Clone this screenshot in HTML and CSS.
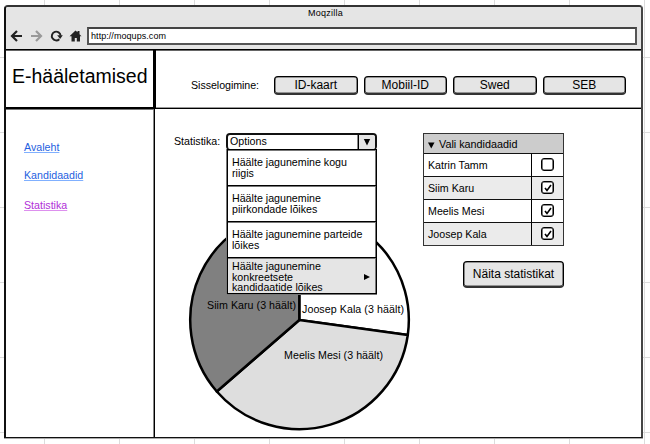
FILE: index.html
```html
<!DOCTYPE html>
<html lang="et">
<head>
<meta charset="utf-8">
<title>Moqzilla</title>
<link rel="stylesheet" href="styles.css">
</head>
<body>
<div class="window">
  <header class="chrome">
    <div class="title">Moqzilla</div>
    <div class="toolbar">
      <svg class="nav" width="74" height="16" viewBox="0 0 74 16" fill="none">
        <path d="M12 8H2M7 3L2 8l5 5" stroke="#222" stroke-width="2.2"/>
        <path d="M21 8h10M26 3l5 5-5 5" stroke="#999" stroke-width="2.2"/>
        <path d="M49.300 11.200A4.400 4.400 0 1 1 50.600 7.600" stroke="#222" stroke-width="1.9"/>
        <path d="M47.200 7.200h5.600l-2.700 3.800z" fill="#222"/>
        <path d="M59.500 8.200L65.500 2.500l2 1.800V3h2v3.200L71.500 8.200h-1.500V13.500h-3.200v-3.500h-2v3.500h-3.300V8.200z" fill="#222"/>
      </svg>
      <div class="address">http://moqups.com</div>
    </div>
  </header>
  <div class="page">
    <h1 class="brand">E-hääletamised</h1>
    <section class="login">
      <span class="login-label">Sisselogimine:</span>
      <button class="btn">ID-kaart</button>
      <button class="btn">Mobiil-ID</button>
      <button class="btn">Swed</button>
      <button class="btn">SEB</button>
    </section>
    <nav class="side">
      <a>Avaleht</a>
      <a>Kandidaadid</a>
      <a class="visited">Statistika</a>
    </nav>
    <main class="content">
      <section class="stats">
        <div class="field">
          <span class="field-label">Statistika:</span>
          <div class="select">
            <span class="value">Options</span>
            <span class="arrow"><svg width="8" height="7"><path d="M.8 0h6.400L4 6.500z"/></svg></span>
            <ul class="menu">
              <li>Häälte jagunemine kogu<br>riigis</li>
              <li>Häälte jagunemine<br>piirkondade lõikes</li>
              <li>Häälte jagunemine parteide<br>lõikes</li>
              <li class="active">Häälte jagunemine<br>konkreetsete<br>kandidaatide lõikes<svg class="more" width="6" height="6"><path d="M0 0v6l6-3z"/></svg></li>
            </ul>
          </div>
        </div>
        <svg class="pie" width="224" height="224" viewBox="0 0 224 224">
          <g stroke="#000" stroke-width="2.5" stroke-linejoin="round">
            <path fill="#fff" d="M111.300 112V2.500A109.500 109.500 0 0 1 219.800 127z"/>
            <path fill="#dedede" d="M111.300 112L219.800 127A109.500 109.500 0 0 1 28.800 183.500z"/>
            <path fill="#808080" d="M111.300 112L28.800 183.500A109.500 109.500 0 0 1 111.300 2.500z"/>
          </g>
          <text x="19" y="101" textLength="89">Siim Karu (3 häält)</text>
          <text x="114" y="105" textLength="102">Joosep Kala (3 häält)</text>
          <text x="96" y="151" textLength="99">Meelis Mesi (3 häält)</text>
        </svg>
      </section>
      <section class="candidates">
        <table class="list">
          <colgroup><col><col class="check"></colgroup>
          <thead><tr><th colspan="2"><svg width="7" height="7"><path d="M0 .5h6.500L3.250 6.500z"/></svg>Vali kandidaadid</th></tr></thead>
          <tbody>
            <tr><td>Katrin Tamm</td><td><i class="box"></i></td></tr>
            <tr><td>Siim Karu</td><td><i class="box"><svg width="8" height="8"><path d="M1 4l2 2.500L7 1"/></svg></i></td></tr>
            <tr><td>Meelis Mesi</td><td><i class="box"><svg width="8" height="8"><path d="M1 4l2 2.500L7 1"/></svg></i></td></tr>
            <tr><td>Joosep Kala</td><td><i class="box"><svg width="8" height="8"><path d="M1 4l2 2.500L7 1"/></svg></i></td></tr>
          </tbody>
        </table>
        <button class="btn show">Näita statistikat</button>
      </section>
    </main>
  </div>
</div>
</body>
</html>
```
FILE: styles.css
```css
* { box-sizing: border-box; }
body {
  margin: 0;
  height: 444px;
  overflow: hidden;
  padding: 5px 0 0 4px;
  background:
    repeating-linear-gradient(to right, transparent 0 44px, #dcdcdc 44px 45px, transparent 45px 75px),
    repeating-linear-gradient(to bottom, transparent 0 57px, #dcdcdc 57px 58px, transparent 58px 75px),
    #fff;
  font: 10.67px/12px "Liberation Sans", Arial, sans-serif;
  color: #000;
}
.window {
  width: 639px;
  height: 433px;
  display: flex;
  flex-direction: column;
  border: 2px solid #444;
  border-top: 2px solid #333;
  border-left-color: #111;
  border-bottom: 1px solid #111;
  border-radius: 4px 4px 0 0;
  background: #fff;
  box-shadow: 0 1px #aaa;
  overflow: hidden;
}
.chrome { flex: none; height: 43px; background: #e5e5e5; border-bottom: 1px solid #000; }
.title { height: 20px; padding-top: 1px; padding-left: 4px; font-size: 9px; letter-spacing: .25px; line-height: 11px; text-align: center; }
.toolbar { display: flex; padding-left: 4px; }
.nav { margin-top: 1px; }
.address {
  width: 550px;
  height: 18px;
  margin-left: 3px;
  padding-left: 2px;
  background: #fff;
  border: 2px solid #555;
  border-top-color: #444;
  font-size: 9px;
  line-height: 14px;
  letter-spacing: .06px;
}
.page { flex: 1; display: grid; grid-template-columns: 149px 1fr; grid-template-rows: 59px 1fr; box-shadow: inset 0 1px #666; }
.brand { margin: 0; padding: 14px 0 0 6px; border-right: 2px solid #000; border-bottom: 2px solid #000; font-size: 19.5px; font-weight: 400; line-height: 24px; white-space: nowrap; }
.login { display: flex; align-items: flex-start; padding: 26px 0 0 35px; border-left: 1px solid #000; border-bottom: 1px solid #000; box-shadow: inset 0 -1px #999; }
.login-label { width: 82px; padding-top: 3px; letter-spacing: -.05px; }
.btn {
  flex: none;
  width: 83.5px;
  height: 19px;
  margin: 0 6px 0 0;
  padding: 0;
  background: #e5e5e5;
  border: 1px solid #000;
  border-bottom: 2px solid #333;
  border-radius: 4px;
  box-shadow: inset 0 0 0 .6px #444;
  font: 12px/15px "Liberation Sans", Arial, sans-serif;
  color: #000;
}
.login .btn { position: relative; left: 1px; }
.side { display: flex; flex-direction: column; align-items: flex-start; padding: 32px 0 0 18px; border-right: 1px solid #000; box-shadow: inset 0 1px #777, inset -1px 0 #888; }
.side a { height: 12px; margin-bottom: 16px; color: #1f5fe0; text-decoration: underline; text-decoration-color: #80b0ff; }
.side a:nth-child(2) { margin-bottom: 18px; }
.side .visited { color: #b030d8; text-decoration-color: #dd90ee; }
.content { display: flex; align-items: flex-start; padding: 24px 0 0 19px; }
.stats { width: 249px; }
.field { display: flex; height: 17px; }
.field-label { width: 52px; padding-top: 2px; }
.select { position: relative; width: 151px; height: 17px; display: flex; border: 2px solid #111; border-bottom: 1px solid #000; border-radius: 4px; background: #fff; }
.value { flex: 1; padding: 0 0 0 2px; }
.arrow { width: 17px; padding: 4px 0 0 4px; border-left: 1px solid #000; box-shadow: -1px 0 #888; background: #e5e5e5; display: flex; border-radius: 0 2px 2px 0; }
.menu { position: absolute; top: 14px; left: -1px; width: 150px; margin: 0; padding: 0; list-style: none; border: 1px solid #000; border-top: 0; background: #fff; box-shadow: -1px 0 #777, 0 1px #777; z-index: 1; }
.menu li { position: relative; height: 36px; padding: 7px 0 0 4px; border-top: 1px solid #000; box-shadow: inset 0 1px #777, inset -1px 0 #777; line-height: 11px; white-space: nowrap; }
.menu .active { padding-top: 3px; line-height: 10.5px; background: #e5e5e5; }
.more { position: absolute; right: 6px; top: 16px; }
.pie { display: block; margin: 58px 0 0 14px; }
.pie text { font-size: 10.67px; }
.candidates { display: flex; flex-direction: column; align-items: flex-end; }
.list { width: 141px; border-collapse: separate; border-spacing: 0; table-layout: fixed; border: 1px solid #333; }
.list .check { width: 32px; }
.list th { height: 19px; padding: 0 0 0 4px; text-align: left; font-weight: 400; font-size: 10.8px; background: #ccc; }
.list th svg { margin-right: 4px; vertical-align: -1px; }
.list td { height: 23px; padding: 0 0 0 4px; border-top: 1px solid #111; }
.list td:nth-child(2) { padding: 0; border-left: 1px solid #000; }
.list tbody tr:nth-child(even) td { background: #ebebeb; }
.box { display: flex; width: 13px; height: 13px; margin: 0 auto 1px; padding: .5px; border: 1px solid #000; box-shadow: inset 0 0 0 .6px #222; border-radius: 3px; background: #fff; }
.box svg { flex: none; fill: none; stroke: #000; stroke-width: 1.6; margin: 1px 0 0 1px; }
.show { width: 101px; height: 27px; margin: 15px 0 0; line-height: 22px; }
```
